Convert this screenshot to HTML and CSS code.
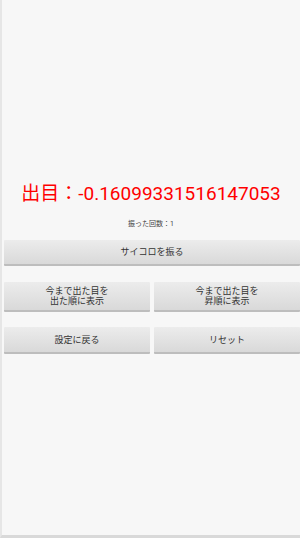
FILE: index.html
```html
<!doctype html>
<html><head>
<meta charset="UTF-8">
<meta name="viewport" content="width=device-width, initial-scale=1.0">
<title>サイコロ</title>
<link rel="stylesheet" href="styles.css">
</head>
<body>
<div id="screen">
  <div id="result">出目：-0.16099331516147053</div>
  <div id="count">振った回数：1</div>
  <div class="row first">
    <button class="btn">サイコロを振る</button>
  </div>
  <div class="row second">
    <button class="btn">今まで出た目を<br>出た順に表示</button>
    <button class="btn">今まで出た目を<br>昇順に表示</button>
  </div>
  <div class="row third">
    <button class="btn">設定に戻る</button>
    <button class="btn">リセット</button>
  </div>
</div>
</body>
</html>
```
FILE: styles.css
```css
html, body {
    margin: 0;
    padding: 0;
    height: 100%;
}
body {
    background-color: #f7f7f7;
    font-family: Roboto, "Noto Sans CJK JP", sans-serif;
    border-left: 2px solid #e6e6e6;
    border-bottom: 3px solid #d9d9d9;
    box-sizing: border-box;
}
#screen {
    padding-top: 179px;
}
#result {
    color: #ff0000;
    font-size: 19px;
    text-align: center;
    line-height: 30px;
}
#count {
    color: #444;
    font-size: 7px;
    text-align: center;
    margin-top: 10px;
    line-height: 10px;
}
.row {
    display: flex;
    gap: 4px;
    padding-left: 2px;
}
.first {
    margin-top: 11px;
}
.second {
    margin-top: 16px;
}
.third {
    margin-top: 15px;
}
.btn {
    flex: 1;
    font-family: Roboto, "Noto Sans CJK JP", sans-serif;
    font-size: 9px;
    line-height: 10px;
    color: #333;
    border: none;
    border-bottom: 2px solid #bdbdbd;
    border-radius: 1px;
    background: linear-gradient(#ececec, #d9d9d9);
    height: 26px;
    padding: 0;
}
.second .btn {
    height: 30px;
}
.third .btn {
    height: 27px;
}
```
